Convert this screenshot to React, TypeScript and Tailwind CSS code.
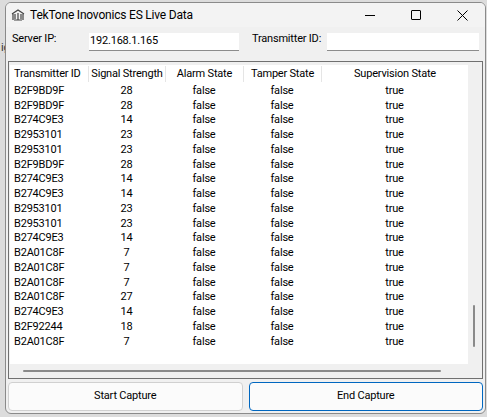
import React from "react";

const rows: [string, string][] = [
  ["B2F9BD9F","28"],["B2F9BD9F","28"],["B274C9E3","14"],["B2953101","23"],["B2953101","23"],
  ["B2F9BD9F","28"],["B274C9E3","14"],["B274C9E3","14"],["B2953101","23"],["B2953101","23"],
  ["B274C9E3","14"],["B2A01C8F","7"],["B2A01C8F","7"],["B2A01C8F","7"],["B2A01C8F","27"],
  ["B274C9E3","14"],["B2F92244","18"],["B2A01C8F","7"],
];

export default function App() {
  return (
    <div className="w-[487px] h-[417px] bg-[#dcdcdc] relative overflow-hidden text-[11px] tracking-[-0.2px] whitespace-nowrap text-black" style={{ fontFamily: 'Roboto,"Noto Sans",sans-serif' }}>
      <div className="absolute left-[1px] top-[40px] text-[#333]">ig</div>
      <div className="absolute left-[5px] top-[2px] w-[481px] h-[412px] bg-[#f0f0f0] border border-[#8a8a8a] rounded-[6px] flex flex-col overflow-hidden">
        <div className="h-[24px] flex items-center bg-[#f3f3f3]">
          <svg width="14" height="12" viewBox="0 0 14 12" className="ml-[5px] mr-[5px]"><path d="M1 5 L7 1 L13 5 M2 5v6 M12 5v6 M4 5v5 M10 5v5 M7 4v7 M3 11h8" stroke="#444" fill="none" strokeWidth="1.2"/></svg>
          <span className="text-[12px] leading-none">TekTone Inovonics ES Live Data</span>
          <div className="ml-auto flex items-center">
            <div className="w-[46px] flex justify-center"><div className="w-[10px] h-px bg-black" /></div>
            <div className="w-[46px] flex justify-center"><div className="w-[10px] h-[10px] border border-black rounded-[1px]" /></div>
            <div className="w-[46px] flex justify-center">
              <svg width="11" height="11" viewBox="0 0 11 11"><path d="M0.5 0.5 L10.5 10.5 M10.5 0.5 L0.5 10.5" stroke="black" strokeWidth="1"/></svg>
            </div>
          </div>
        </div>
        <div className="flex items-start h-[34px] pt-[4px]">
          <span className="ml-[6px] w-[77px]">Server IP:</span>
          <div className="w-[150px] h-[18px] mt-[2px] bg-white border-b border-[#8c8c8c] flex items-center pl-[1px]">192.168.1.165</div>
          <span className="ml-[13px] w-[75px]">Transmitter ID:</span>
          <div className="w-[152px] h-[18px] mt-[2px] bg-white border-b border-[#8c8c8c]" />
        </div>
        <div className="mx-[2px] h-[318px] border border-[#707070] bg-[#f0f0f0] flex flex-col">
          <div className="flex flex-1">
            <div className="w-[458px] bg-white flex flex-col mt-[3px] ml-[1px]">
              <div className="flex h-[18px] items-center">
                <div className="w-[78px] pl-[4px]">Transmitter ID</div>
                <div className="w-[77px] text-center border-l border-[#e5e5e5]">Signal Strength</div>
                <div className="w-[78px] text-center border-l border-[#e5e5e5]">Alarm State</div>
                <div className="w-[78px] text-center border-l border-[#e5e5e5]">Tamper State</div>
                <div className="flex-1 text-center border-l border-[#e5e5e5]">Supervision State</div>
              </div>
              {rows.map(([id, s], i) => (
                <div key={i} className="flex h-[14.76px] items-center leading-none">
                  <div className="w-[78px] pl-[4px]">{id}</div>
                  <div className="w-[77px] text-center">{s}</div>
                  <div className="w-[78px] text-center">false</div>
                  <div className="w-[78px] text-center">false</div>
                  <div className="flex-1 text-center">true</div>
                </div>
              ))}
            </div>
            <div className="flex-1 relative">
              <div className="absolute left-[5px] top-[243px] w-[2px] h-[42px] bg-[#8a8a8a] rounded" />
            </div>
          </div>
          <div className="h-[14px] flex items-center">
            <div className="ml-[14px] w-[418px] h-[2px] bg-[#8a8a8a] rounded" />
          </div>
        </div>
        <div className="flex gap-[6px] px-[2px] mt-[3px]">
          <button className="flex-1 h-[29px] bg-[#fbfbfb] border border-[#d0d0d0] rounded-[4px]">Start Capture</button>
          <button className="flex-1 h-[29px] bg-[#fbfbfb] border border-[#0067c0] rounded-[4px]">End Capture</button>
        </div>
      </div>
    </div>
  );
}
